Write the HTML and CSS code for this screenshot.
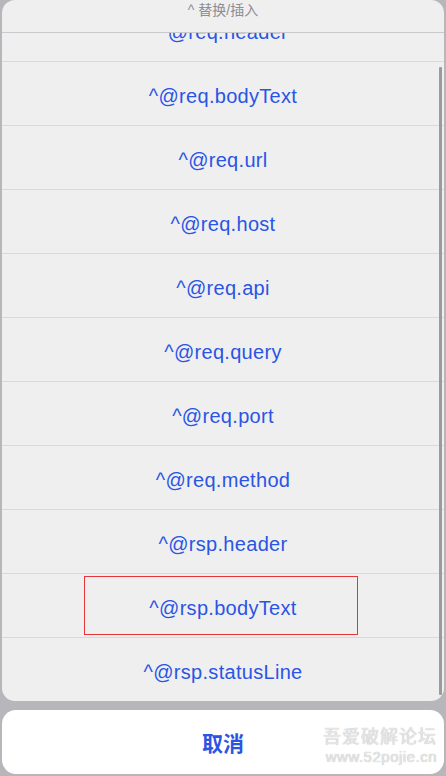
FILE: index.html
```html
<!DOCTYPE html>
<html lang="zh-CN">
<head>
<meta charset="utf-8">
<title>替换/插入</title>
<link rel="stylesheet" href="styles.css">
</head>
<body>
<div class="screen">
  <div class="sheet">
    <div class="sheet-title">^ 替换/插入</div>
    <div class="viewport">
      <ul class="list">
        <li class="row">^@req.header</li>
        <li class="row">^@req.bodyText</li>
        <li class="row">^@req.url</li>
        <li class="row">^@req.host</li>
        <li class="row">^@req.api</li>
        <li class="row">^@req.query</li>
        <li class="row">^@req.port</li>
        <li class="row">^@req.method</li>
        <li class="row">^@rsp.header</li>
        <li class="row marked">^@rsp.bodyText<span class="mark"></span></li>
        <li class="row">^@rsp.statusLine</li>
      </ul>
      <div class="scrollbar"></div>
    </div>
  </div>
  <div class="cancel">取消</div>
  <div class="watermark">
    <div class="wm-cn">吾爱破解论坛</div>
    <div class="wm-url">www.52pojie.cn</div>
  </div>
</div>
</body>
</html>
```

FILE: styles.css
```css
* { box-sizing: border-box; }
html, body {
  margin: 0;
  padding: 0;
  background: #b7b7bb;
}
.screen {
  position: relative;
  width: 446px;
  height: 776px;
  padding: 0 2px;
  display: flex;
  flex-direction: column;
  gap: 9px;
  font-family: "Liberation Sans", "Noto Sans CJK SC", sans-serif;
  overflow: hidden;
}
.sheet {
  height: 701px;
  background: #efeff0;
  border-radius: 13px;
  display: flex;
  flex-direction: column;
  overflow: hidden;
}
.sheet-title {
  height: 33px;
  border-bottom: 1px solid #c9c9cd;
  text-align: center;
  color: #8d8d92;
  font-size: 14px;
  line-height: 18px;
  padding-top: 1px;
  flex: none;
}
.viewport {
  position: relative;
  flex: 1;
  overflow: hidden;
}
.list {
  list-style: none;
  margin: -35px 0 0;
  padding: 0;
}
.row {
  position: relative;
  height: 64px;
  padding-top: 5px;
  border-bottom: 1px solid #d9d9dd;
  display: flex;
  align-items: center;
  justify-content: center;
  color: #2a55e4;
  font-size: 20px;
  letter-spacing: 0.3px;
}
.row:last-child { border-bottom: none; }
.mark {
  position: absolute;
  left: 82px;
  width: 274px;
  top: 2px;
  bottom: 2px;
  border: 1px solid #e8353c;
}
.scrollbar {
  position: absolute;
  right: 2px;
  top: 34px;
  width: 3px;
  height: 628px;
  background: #9b9b9d;
  border-radius: 1px;
}
.cancel {
  height: 64px;
  background: #ffffff;
  border-radius: 14px;
  display: flex;
  align-items: center;
  justify-content: center;
  color: #2a55e4;
  font-size: 21px;
  font-weight: bold;
  font-family: "Noto Sans CJK SC", sans-serif;
}
.watermark {
  position: absolute;
  right: 9px;
  top: 726px;
  text-align: right;
  color: #e6e6e6;
  text-shadow: 0 0 1px #b0b0b0;
  line-height: 1;
}
.wm-cn {
  font-family: "Noto Sans CJK SC", sans-serif;
  font-size: 18px;
  letter-spacing: 1px;
}
.wm-url {
  margin-top: 5px;
  font-family: "Liberation Sans", sans-serif;
  font-size: 15px;
  letter-spacing: 0.5px;
}
```
